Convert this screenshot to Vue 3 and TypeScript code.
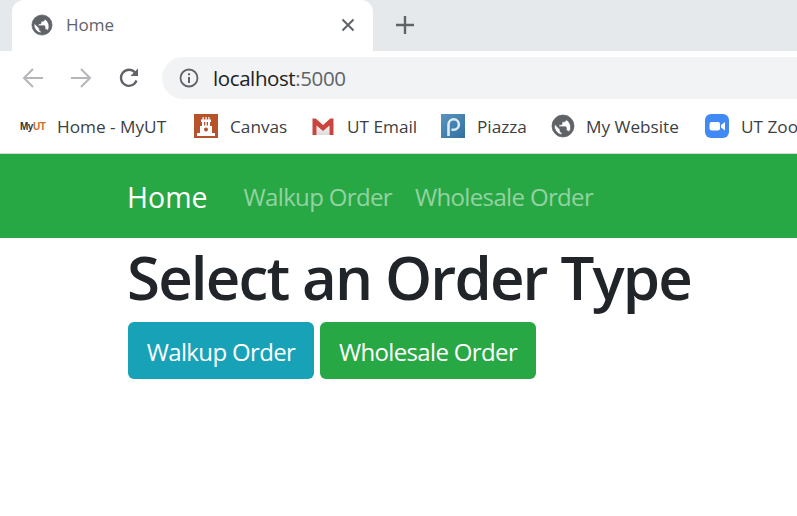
<script setup lang="ts">
const bookmarks = [
  { id: 'myut', label: 'Home - MyUT' },
  { id: 'canvas', label: 'Canvas' },
  { id: 'gmail', label: 'UT Email' },
  { id: 'piazza', label: 'Piazza' },
  { id: 'globe', label: 'My Website' },
  { id: 'zoom', label: 'UT Zoom' },
]
</script>

<template>
  <div class="page">
    <svg width="0" height="0" class="defs">
      <defs>
        <symbol id="globe" viewBox="0 0 24 24">
          <path d="M12 1a11 11 0 1 0 0 22 11 11 0 0 0 0-22zM3.500 10l5.500 5.500v1.200c0 1.200 1 2 2 2v2.100A9 9 0 0 1 3.500 10zm14.700 8.200c-.3-.8-1-1.400-1.900-1.400h-1v-3c0-.6-.4-1-1-1H8v-2h2c.6 0 1-.4 1-1v-2h2c1.100 0 2-.9 2-2v-.4a9 9 0 0 1 3.200 12.800z" fill="#5f6368" stroke="#5f6368" stroke-width="0.700" fill-rule="evenodd" />
        </symbol>
        <linearGradient id="pz" x1="0" y1="0" x2="1" y2="1">
          <stop offset="0" stop-color="#5a94bd" />
          <stop offset="1" stop-color="#33709f" />
        </linearGradient>
        <linearGradient id="gm" x1="0" y1="0" x2="0" y2="1">
          <stop offset="0" stop-color="#f6f6f6" />
          <stop offset="1" stop-color="#dcdcdc" />
        </linearGradient>
      </defs>
    </svg>
    <div class="chrome">
      <div class="tabstrip">
        <div class="tab">
          <svg class="tab-globe" viewBox="0 0 24 24"><use href="#globe" /></svg>
          <span class="tab-title">Home</span>
          <svg class="tab-close" viewBox="0 0 14 14"><path d="M1.500 1.500l11 11M12.500 1.500l-11 11" stroke="#5f6368" stroke-width="2" /></svg>
        </div>
        <svg class="new-tab" viewBox="0 0 20 20"><path d="M10 1v18M1 10h18" stroke="#5f6368" stroke-width="2.400" /></svg>
      </div>
      <div class="toolbar">
        <svg class="nav-icon" viewBox="0 0 24 24"><path d="M22 12H4M12 3l-9 9 9 9" fill="none" stroke="#b4b6b9" stroke-width="2" /></svg>
        <svg class="nav-icon" viewBox="0 0 24 24"><path d="M2 12h18M12 3l9 9-9 9" fill="none" stroke="#b4b6b9" stroke-width="2" /></svg>
        <svg class="nav-icon reload" viewBox="0 0 24 24"><path d="M19.500 14.500A8 8 0 1 1 18 6.500" fill="none" stroke="#5f6368" stroke-width="2.300" /><path d="M21 2.500V10h-7.500z" fill="#5f6368" /></svg>
        <div class="omnibox">
          <svg class="info" viewBox="0 0 20 20"><circle cx="10" cy="10" r="8.500" fill="none" stroke="#5f6368" stroke-width="1.800" /><path d="M9 9h2v6H9zM9 5.200h2v2H9z" fill="#5f6368" /></svg>
          <span class="host">localhost</span><span class="port">:5000</span>
        </div>
      </div>
      <div class="bookmarks">
        <div v-for="b in bookmarks" :key="b.id" class="bookmark" :class="'bm-' + b.id">
          <span v-if="b.id === 'myut'" class="myut"><b class="my">My</b><b class="ut">UT</b></span>
          <svg v-else-if="b.id === 'canvas'" class="bm-icon" viewBox="0 0 24 24">
            <rect width="24" height="24" fill="#b5532a" />
            <path d="M3 22v-3h3v-7h2V8H7V5.500h1.500V3h1.200v2.500h1.700V3h1.200v2.500h1.700V3h1.200v2.500H17V8h-1v4h2v7h3v3z" fill="#fff" />
            <circle cx="12" cy="15.500" r="2" fill="#b5532a" />
            <rect x="10" y="8" width="1.300" height="3.500" fill="#b5532a" />
            <rect x="12.700" y="8" width="1.300" height="3.500" fill="#b5532a" />
          </svg>
          <svg v-else-if="b.id === 'gmail'" class="bm-icon" viewBox="0 0 24 24">
            <path d="M5.500 11v10h13V11L12 16z" fill="url(#gm)" />
            <path d="M1.500 4.500h3.200L12 11l7.300-6.500h3.200V21h-4V11.500L12 17l-6.500-5.500V21h-4z" fill="#c8463c" />
          </svg>
          <svg v-else-if="b.id === 'piazza'" class="bm-icon" viewBox="0 0 24 24">
            <rect width="24" height="24" fill="url(#pz)" />
            <path d="M7.500 22V10.500a5.200 5.200 0 1 1 5.200 5.200H10.500" fill="none" stroke="#dcecf6" stroke-width="2.600" />
          </svg>
          <svg v-else-if="b.id === 'globe'" class="bm-icon" viewBox="0 0 24 24"><use href="#globe" /></svg>
          <svg v-else class="bm-icon" viewBox="0 0 24 24">
            <rect width="24" height="24" rx="6" fill="#4189f4" />
            <rect x="4.500" y="8" width="10.500" height="8.500" rx="2" fill="#fff" />
            <path d="M16 11l4-3v8.500l-4-3z" fill="#fff" />
          </svg>
          <span class="bm-label">{{ b.label }}</span>
        </div>
      </div>
    </div>

    <nav class="navbar">
      <span class="brand">Home</span>
      <span class="nav-link">Walkup Order</span>
      <span class="nav-link">Wholesale Order</span>
    </nav>

    <main class="content">
      <h1 class="title">Select an Order Type</h1>
      <div class="actions">
        <button class="btn btn-info">Walkup Order</button>
        <button class="btn btn-success">Wholesale Order</button>
      </div>
    </main>
  </div>
</template>

<style>
html, body { margin: 0; background: #fff; overflow: hidden; }
</style>

<style scoped>
.defs { position: absolute; }
.page {
  width: 797px;
  height: 516px;
  overflow: hidden;
  font-family: "Open Sans", "Noto Sans", sans-serif;
  color: #212529;
}
.chrome { border-bottom: 1px solid #d8dadc; }
.tabstrip {
  height: 51px;
  background: #e6e9ec;
  display: flex;
  align-items: center;
}
.tab {
  box-sizing: border-box;
  width: 361px;
  height: 51px;
  margin-left: 12px;
  background: #fff;
  border-radius: 12px 12px 0 0;
  display: flex;
  align-items: center;
  padding: 0 18px 2px 19px;
}
.tab-globe { width: 22px; height: 22px; margin-right: 13px; }
.tab-title { font-size: 17px; color: #5f6368; flex: 1; }
.tab-close { width: 14px; height: 14px; }
.new-tab { width: 20px; height: 20px; margin-left: 22px; margin-bottom: 2px; }
.toolbar {
  height: 48px;
  display: flex;
  align-items: flex-end;
  background: #fff;
}
.nav-icon { width: 24px; height: 24px; margin-bottom: 9px; flex: none; }
.nav-icon:nth-child(1) { margin-left: 21px; }
.nav-icon:nth-child(2) { margin-left: 24px; }
.nav-icon:nth-child(3) { margin-left: 24px; }
.omnibox {
  margin-left: 21px;
  flex: 1;
  height: 42px;
  background: #f1f3f4;
  border-radius: 21px 0 0 21px;
  display: flex;
  align-items: center;
  padding-left: 17px;
  font-size: 20.500px;
  letter-spacing: -0.4px;
}
.info { width: 20px; height: 20px; margin-right: 14px; }
.host { color: #202124; }
.port { color: #5f6368; }
.bookmarks {
  height: 54px;
  display: flex;
  align-items: center;
  padding-left: 20px;
  white-space: nowrap;
}
.bookmark { display: flex; align-items: center; flex: none; }
.bm-label { font-size: 17.200px; color: #3c4043; }
.bm-icon { width: 24px; height: 24px; margin-right: 12px; flex: none; }
.myut { width: 25px; margin-right: 12px; font-family: "Liberation Sans", sans-serif; font-size: 10px; letter-spacing: -0.5px; }
.my { color: #333; }
.ut { color: #c8702a; }
.bm-myut { width: 174px; }
.bm-canvas { width: 117px; }
.bm-gmail { width: 130px; }
.bm-piazza { width: 110px; }
.bm-globe { width: 154px; }
.bm-globe .bm-icon { margin-right: 11px; }
.navbar {
  height: 84px;
  background: #28a745;
  display: flex;
  align-items: center;
  padding: 1px 0 0 128px;
  box-sizing: border-box;
}
.brand { font-size: 28.500px; color: #fff; margin: 0 36px 0 -1px; }
.nav-link { font-size: 24px; color: rgba(255, 255, 255, 0.5); margin-right: 23px; letter-spacing: -0.65px; }
.content { padding-left: 128px; }
.title {
  margin: 0 0 0 -1px;
  font-size: 60px;
  line-height: 78px;
  height: 84px;
  font-weight: 600;
  color: #212529;
  letter-spacing: -1.85px;
  white-space: nowrap;
}
.actions { display: flex; gap: 6px; }
.btn {
  box-sizing: border-box;
  height: 57px;
  border: none;
  border-radius: 6px;
  color: #fff;
  font-family: inherit;
  font-size: 24px;
  letter-spacing: -0.65px;
  padding: 2px 10px 0;
}
.btn-info { background: #17a2b8; width: 186px; }
.btn-success { background: #28a745; width: 216px; }
</style>
